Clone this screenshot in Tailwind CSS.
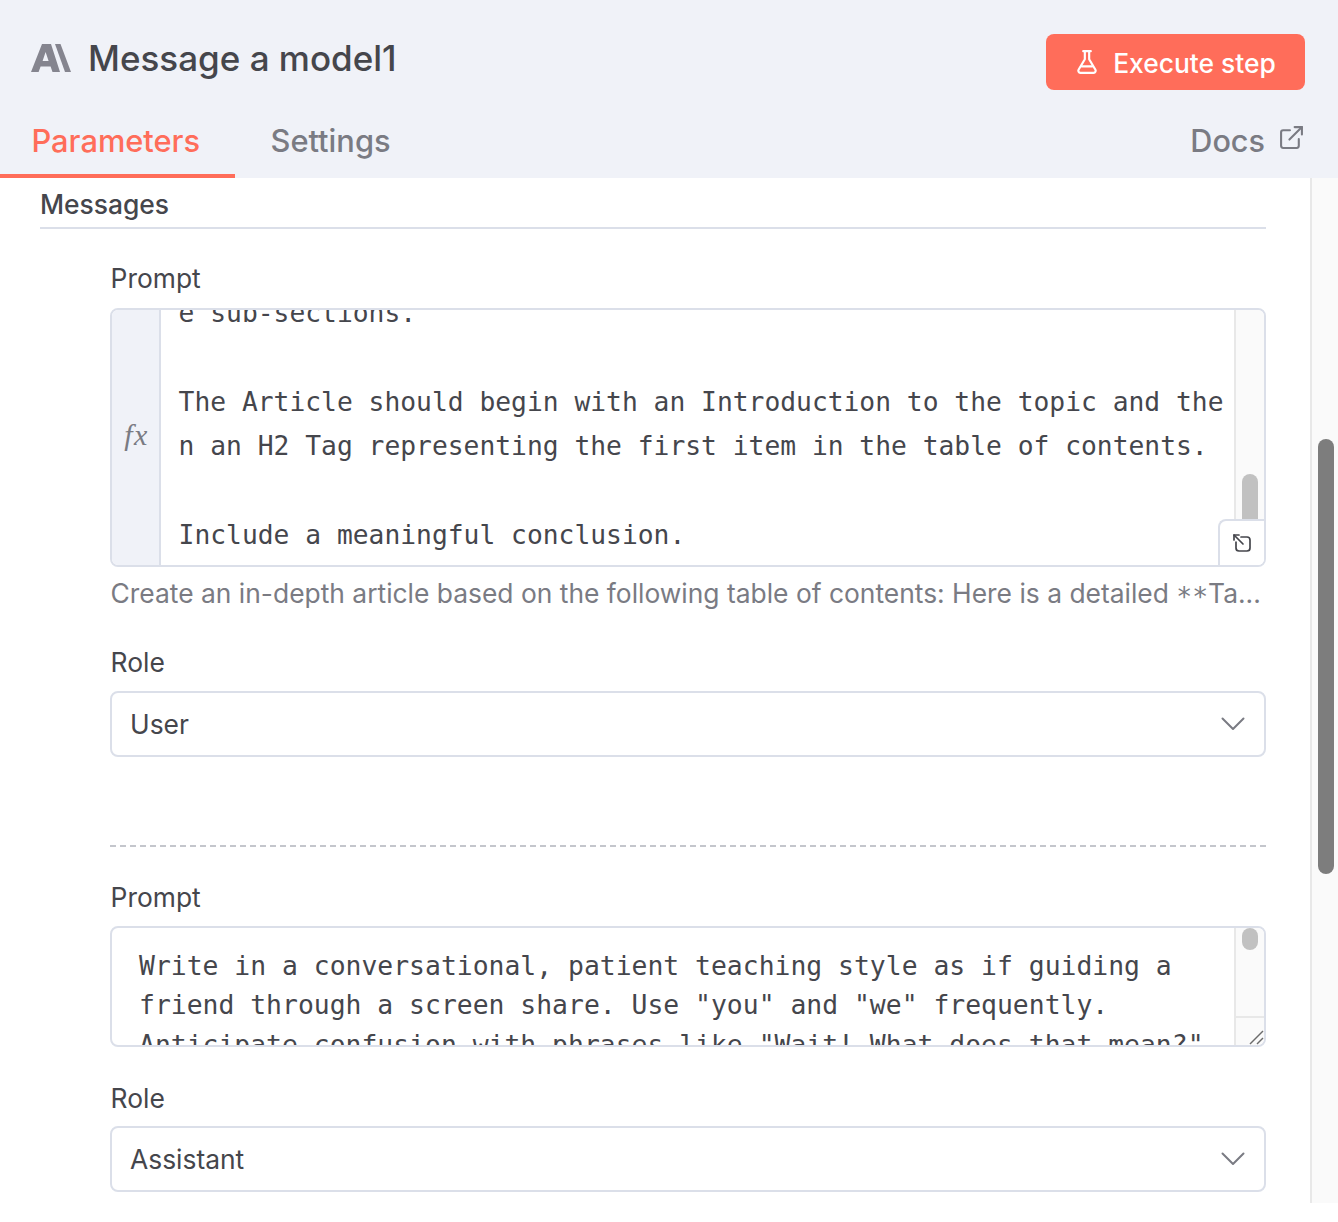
<!doctype html>
<html lang="en">
<head>
<meta charset="utf-8">
<title>Message a model1</title>
<script src="https://cdn.jsdelivr.net/npm/@tailwindcss/browser@4"></script>
</head>
<body class="bg-white">
<div class="w-[1338px] h-[1222px] overflow-hidden flex flex-col bg-white font-['Inter','Liberation_Sans',sans-serif]">
  <header class="h-[178px] shrink-0 bg-[#f0f2f8] flex flex-col">
    <div class="h-[118px] pl-[31px] pr-[33px] flex items-center justify-between">
      <div class="flex items-center gap-[17px] -mt-[2px]">
        <svg class="w-[40px] h-[28px]" viewBox="0 0 40 28" fill="#85858f"><path d="M0 28 L11 0 H20 L29 28 H21.5 L19.6 22.5 H9.6 L7.6 28 Z M11.6 17 H17.6 L14.6 8 Z"/><path d="M24 0 H29.5 L40 28 H34 Z"/></svg>
        <h1 class="text-[35px] leading-[40px] font-medium text-[#45464c]">Message a model1</h1>
      </div>
      <button class="w-[259px] h-[56px] mt-[6px] rounded-[8px] bg-[#ff6d5a] text-white text-[26.4px] font-medium flex items-center justify-center gap-[13px]">
        <svg class="w-[26px] h-[26px] -ml-[1px]" viewBox="0 0 24 24" fill="none" stroke="currentColor" stroke-width="2" stroke-linecap="round" stroke-linejoin="round"><path d="M10 2v7.5L4.2 19.2A1.9 1.9 0 0 0 5.8 22h12.4a1.9 1.9 0 0 0 1.6-2.8L14 9.5V2"/><path d="M8.5 2h7"/><path d="M7 16h10"/></svg>
        <span class="mt-[3px]">Execute step</span>
      </button>
    </div>
    <div class="flex-1 flex justify-between">
      <nav class="flex">
        <div class="w-[235px] pl-[31.5px] pt-[3px] border-b-[4px] border-[#ff6d5a] text-[#ff6d5a] text-[30.8px] leading-[40px] font-medium">Parameters</div>
        <div class="pl-[35.5px] pt-[3px] text-[#7a7b83] text-[30.8px] leading-[40px] font-medium">Settings</div>
      </nav>
      <div class="pr-[34px] pt-[3px] flex items-start gap-[14px] text-[#7a7b83] text-[30.6px] leading-[40px] font-medium">
        <span>Docs</span>
        <svg class="w-[25px] h-[25px] mt-[4px]" viewBox="0 0 24 24" fill="none" stroke="currentColor" stroke-width="2" stroke-linecap="round" stroke-linejoin="round"><path d="M19 13.5V20a2 2 0 0 1-2 2H4a2 2 0 0 1-2-2V7a2 2 0 0 1 2-2h6.5"/><path d="M15 2h7v7"/><path d="M10 14 22 2"/></svg>
      </div>
    </div>
  </header>

  <div class="flex flex-1 min-h-0 items-start">
    <main class="w-[1310px] shrink-0 pl-[40px] pr-[44px] text-[#45464c]">
      <div class="h-[51px] pt-[8px] border-b-2 border-[#dbdfe9] text-[26.4px] leading-[36px] font-medium">Messages</div>

      <div class="pl-[70px]">
        <label class="block mt-[31px] pl-[0.6px] text-[26.4px] leading-[36px]">Prompt</label>
        <div class="relative mt-[12px] h-[259px] flex border-2 border-[#dbdfe9] rounded-[8px] overflow-hidden">
          <div class="w-[49px] shrink-0 bg-[#f0f2f8] border-r-2 border-[#dbdfe9] flex items-center justify-center">
            <span class="font-['Liberation_Serif',serif] italic text-[30px] tracking-[1.5px] text-[#7a7b83] -mt-[7px] ml-[2px]">fx</span>
          </div>
          <div class="flex-1 min-w-0 overflow-hidden pl-[17.6px] font-['DejaVu_Sans_Mono',monospace] text-[26.3px] leading-[44.4px] text-[#45464c] whitespace-pre"><div class="-mt-[19px]">e sub-sections.

The Article should begin with an Introduction to the topic and the
n an H2 Tag representing the first item in the table of contents.

Include a meaningful conclusion.</div></div>
          <div class="w-[30px] shrink-0 bg-[#fafafa] border-l-2 border-[#e8e8e8] pl-[6px] pt-[164px]">
            <div class="w-[16px] h-[60px] rounded-[8px] bg-[#c1c1c1]"></div>
          </div>
          <div class="absolute right-0 bottom-0 w-[46px] h-[46px] bg-white border-l-2 border-t-2 border-[#dbdfe9] rounded-tl-[8px] flex items-center justify-center">
            <svg class="w-[20px] h-[20px] text-[#45464c]" viewBox="0 0 20 20" fill="none" stroke="currentColor" stroke-width="1.7" stroke-linecap="round" stroke-linejoin="round"><path d="M2 7V2h5"/><path d="M2 2l9 9"/><path d="M4 9v6a3 3 0 0 0 3 3h8a3 3 0 0 0 3-3V7a3 3 0 0 0-3-3H9"/></svg>
          </div>
        </div>
        <p class="mt-[8px] pl-[0.6px] text-[26.4px] leading-[36px] text-[#7a7b83] whitespace-nowrap">Create an in-depth article based on the following table of contents: Here is a detailed <span class="inline-block translate-y-[3px] font-['DejaVu_Sans_Mono',monospace]">**</span>Ta...</p>

        <label class="block mt-[32px] pl-[0.6px] text-[26.4px] leading-[36px]">Role</label>
        <div class="mt-[11px] h-[66px] border-2 border-[#dbdfe9] rounded-[8px] pl-[19px] pr-[19px] flex items-center justify-between text-[26.4px]">
          <span class="-ml-[1px] mt-[2px]">User</span>
          <svg class="w-[24px] h-[16px]" viewBox="0 0 24 16" fill="none" stroke="#7a7b83" stroke-width="2" stroke-linecap="round" stroke-linejoin="round"><path d="M1.5 2.5 12 13 22.5 2.5"/></svg>
        </div>

        <div class="mt-[88px] border-t-2 border-dashed border-[#c4c6cc]"></div>

        <label class="block mt-[32px] pl-[0.6px] text-[26.4px] leading-[36px]">Prompt</label>
        <div class="relative mt-[11px] h-[121px] flex border-2 border-[#dbdfe9] rounded-[8px] overflow-hidden">
          <div class="flex-1 min-w-0 overflow-hidden pl-[27px] pt-[18px] font-['DejaVu_Sans_Mono',monospace] text-[26.4px] leading-[39.3px] whitespace-pre">Write in a conversational, patient teaching style as if guiding a
friend through a screen share. Use "you" and "we" frequently.
Anticipate confusion with phrases like "Wait! What does that mean?"</div>
          <div class="w-[30px] shrink-0 bg-[#fafafa] border-l-2 border-[#e8e8e8] flex flex-col">
            <div class="flex-1 pl-[6px]">
              <div class="w-[16px] h-[22px] rounded-[8px] bg-[#c1c1c1]"></div>
            </div>
            <div class="h-[29px] border-t-2 border-[#e8e8e8] flex items-end justify-end">
              <svg class="w-[16px] h-[16px]" viewBox="0 0 16 16" fill="none" stroke="#6b6b6b" stroke-width="1.4"><path d="M2 15 15 2"/><path d="M9 15 15 9"/></svg>
            </div>
          </div>
        </div>

        <label class="block mt-[33px] pl-[0.6px] text-[26.4px] leading-[36px]">Role</label>
        <div class="mt-[10px] h-[66px] border-2 border-[#dbdfe9] rounded-[8px] pl-[19px] pr-[19px] flex items-center justify-between text-[26.4px]">
          <span class="-ml-[1px] mt-[2px]">Assistant</span>
          <svg class="w-[24px] h-[16px]" viewBox="0 0 24 16" fill="none" stroke="#7a7b83" stroke-width="2" stroke-linecap="round" stroke-linejoin="round"><path d="M1.5 2.5 12 13 22.5 2.5"/></svg>
        </div>
      </div>
    </main>

    <div class="w-[28px] h-[1025px] shrink-0 bg-[#fafafa] border-l-2 border-[#e8e8e8] pl-[6px] pt-[261px]">
      <div class="w-[16px] h-[435px] rounded-[8px] bg-[#7d7d7d]"></div>
    </div>
  </div>
</div>
</body>
</html>
